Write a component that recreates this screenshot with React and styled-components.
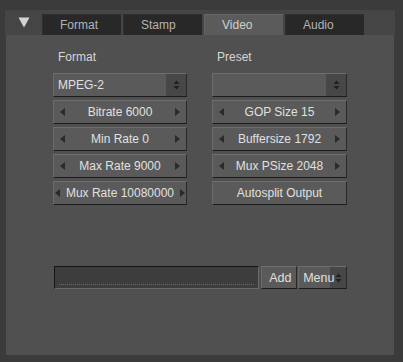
import React from "react";
import styled, { createGlobalStyle } from "styled-components";

const Global = createGlobalStyle`
  html, body { margin: 0; padding: 0; background: #3b3b3b; }
  body { font-family: "Liberation Sans", "DejaVu Sans", sans-serif; font-size: 12px; }
`;

const Panel = styled.div`
  margin: 10px 8px 0 5px;
  width: 390px;
  height: 345px;
  display: flex;
  flex-direction: column;
`;

const Header = styled.div`
  height: 25px;
  background: #454545;
  display: flex;
  align-items: flex-end;
  flex-shrink: 0;
`;

const Toggle = styled.div`
  width: 37px;
  height: 25px;
  display: flex;
  align-items: center;
  justify-content: center;
  align-self: stretch;
`;

const Tabs = styled.div`
  display: flex;
  gap: 2px;
`;

const Tab = styled.div`
  width: 79px;
  height: 21px;
  box-sizing: border-box;
  padding-left: 17px;
  display: flex;
  align-items: center;
  background: ${(p) => (p.$active ? "#5b5b5b" : "#282828")};
  border-top: 1px solid ${(p) => (p.$active ? "#666" : "#2f2f2f")};
  border-left: 1px solid ${(p) => (p.$active ? "#666" : "#2f2f2f")};
  color: ${(p) => (p.$active ? "#d0d0d0" : "#b4b4b4")};
  font-size: 12px;
`;

const Body = styled.div`
  flex: 1;
  margin: 0 1px;
  background: #505050;
  padding: 14px 47px 0 47px;
  display: flex;
  flex-direction: column;
`;

const Columns = styled.div`
  display: grid;
  grid-template-columns: 134px 135px;
  column-gap: 25px;
`;

const Column = styled.div`
  display: flex;
  flex-direction: column;
  gap: 3px;
`;

const Label = styled.div`
  color: #d6d6d6;
  height: 19px;
  padding-left: 5px;
  margin-bottom: 2px;
  line-height: 16px;
`;

const Widget = styled.div`
  position: relative;
  height: 24px;
  box-sizing: border-box;
  background: #5a5a5a;
  border-top: 1px solid #6e6e6e;
  border-left: 1px solid #6a6a6a;
  border-bottom: 1px solid #1c1c1c;
  border-right: 1px solid #2a2a2a;
  color: #e0e0e0;
  display: flex;
  align-items: center;
  justify-content: ${(p) => (p.$left ? "flex-start" : "center")};
  padding: ${(p) => (p.$left ? "0 0 0 4px" : "0")};
  white-space: nowrap;
`;

const DropArea = styled.div`
  position: absolute;
  right: 0;
  top: 0;
  bottom: 0;
  width: 20px;
  background: #474747;
  display: flex;
  align-items: center;
  justify-content: center;
`;

const ArrowL = styled.svg`
  position: absolute;
  left: ${(p) => p.$x ?? 6}px;
  top: 7px;
`;

const ArrowR = styled.svg`
  position: absolute;
  right: ${(p) => p.$x ?? 6}px;
  top: 7px;
`;

const BottomRow = styled.div`
  margin-top: 61px;
  margin-left: 1px;
  display: flex;
  height: 23px;
`;

const TextField = styled.div`
  width: 206px;
  box-sizing: border-box;
  background: #3d3d3d;
  border-top: 1px solid #151515;
  border-left: 1px solid #151515;
  border-bottom: 1px solid #6a6a6a;
  border-right: 1px solid #6a6a6a;
  display: flex;
  align-items: flex-end;
  padding: 0 4px 3px 4px;
`;

const Dots = styled.div`
  flex: 1;
  border-bottom: 1px dotted #6a6a6a;
`;

const Button = styled.div`
  position: relative;
  width: ${(p) => p.$w}px;
  margin-left: ${(p) => p.$ml || 0}px;
  box-sizing: border-box;
  background: #5a5a5a;
  border-top: 1px solid #6e6e6e;
  border-left: 1px solid #6a6a6a;
  border-bottom: 1px solid #1c1c1c;
  border-right: 1px solid #2a2a2a;
  color: #e0e0e0;
  display: flex;
  align-items: center;
  padding-left: ${(p) => p.$pl || 0}px;
  font-size: 12.5px;
  white-space: nowrap;
`;

const ButtonText = styled.span`
  position: relative;
  z-index: 1;
`;

const MenuArea = styled.div`
  position: absolute;
  right: 0;
  top: 0;
  bottom: 0;
  width: 16px;
  background: #474747;
  display: flex;
  align-items: center;
  justify-content: center;
`;

const UpDown = () => (
  <svg width="7" height="10" viewBox="0 0 7 10">
    <path d="M3.5 0.5 L6.5 4 L0.5 4 Z" fill="#202020" />
    <path d="M0.5 6 L6.5 6 L3.5 9.5 Z" fill="#202020" />
  </svg>
);

const Num = ({ children, inset = 6 }) => (
  <Widget>
    <ArrowL $x={inset} width="5" height="8" viewBox="0 0 5 8">
      <path d="M5 0 L0 4 L5 8 Z" fill="#2a2a2a" />
    </ArrowL>
    {children}
    <ArrowR $x={inset} width="5" height="8" viewBox="0 0 5 8">
      <path d="M0 0 L5 4 L0 8 Z" fill="#2a2a2a" />
    </ArrowR>
  </Widget>
);

export default function App() {
  return (
    <>
      <Global />
      <Panel>
        <Header>
          <Toggle>
            <svg width="12" height="11" viewBox="0 0 12 11">
              <path d="M0.5 0.5 L11.5 0.5 L6 10.5 Z" fill="#d4d4d4" />
            </svg>
          </Toggle>
          <Tabs>
            <Tab>Format</Tab>
            <Tab>Stamp</Tab>
            <Tab $active>Video</Tab>
            <Tab>Audio</Tab>
          </Tabs>
        </Header>
        <Body>
          <Columns>
            <Column>
              <Label>Format</Label>
              <Widget $left>
                MPEG-2
                <DropArea>
                  <UpDown />
                </DropArea>
              </Widget>
              <Num>Bitrate 6000</Num>
              <Num>Min Rate 0</Num>
              <Num>Max Rate 9000</Num>
              <Num inset={1}>Mux Rate 10080000</Num>
            </Column>
            <Column>
              <Label>Preset</Label>
              <Widget $left>
                <DropArea>
                  <UpDown />
                </DropArea>
              </Widget>
              <Num>GOP Size 15</Num>
              <Num>Buffersize 1792</Num>
              <Num>Mux PSize 2048</Num>
              <Widget>Autosplit Output</Widget>
            </Column>
          </Columns>
          <BottomRow>
            <TextField>
              <Dots />
            </TextField>
            <Button $w={36} $ml={2} $pl={7}>
              <ButtonText>Add</ButtonText>
            </Button>
            <Button $w={49} $ml={1} $pl={4}>
              <ButtonText>Menu</ButtonText>
              <MenuArea>
                <UpDown />
              </MenuArea>
            </Button>
          </BottomRow>
        </Body>
      </Panel>
    </>
  );
}
